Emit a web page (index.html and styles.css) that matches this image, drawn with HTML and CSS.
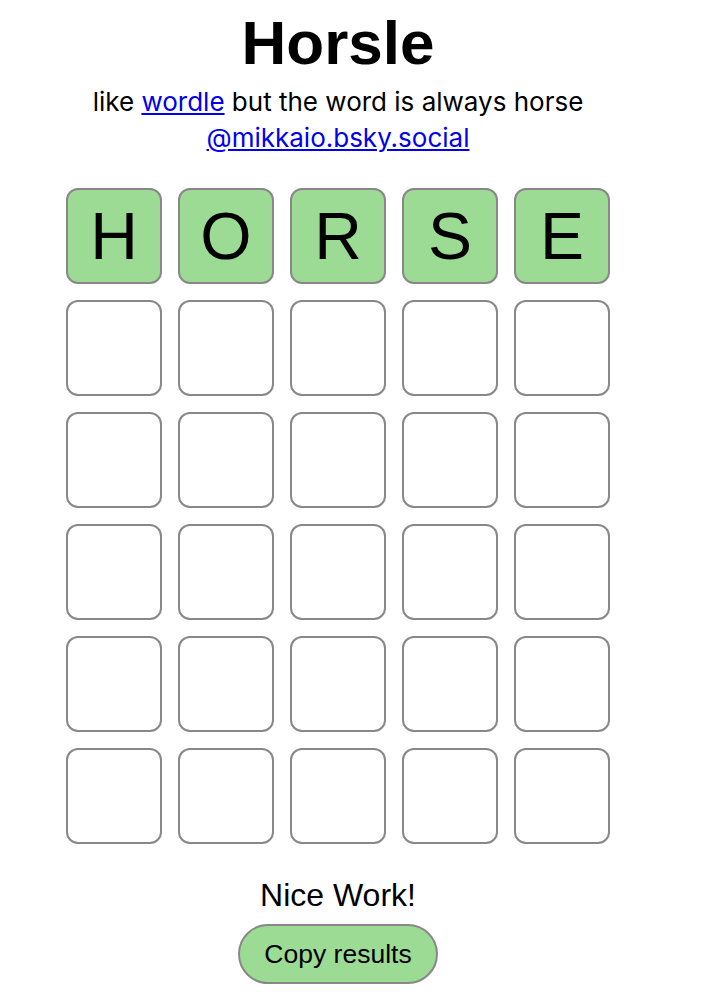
FILE: index.html
```html
<!DOCTYPE html>
<html>
<head>
<meta charset="utf-8">
<title>Horsle</title>
<link rel="stylesheet" href="styles.css">
</head>
<body>
<main class="page">
  <h1 class="title">Horsle</h1>
  <p class="subtitle">like <a href="#">wordle</a> but the word is always horse<br><a href="#">@mikkaio.bsky.social</a></p>
  <div class="board">
    <div class="tile hit">H</div>
    <div class="tile hit">O</div>
    <div class="tile hit">R</div>
    <div class="tile hit">S</div>
    <div class="tile hit">E</div>
    <div class="tile"></div><div class="tile"></div><div class="tile"></div><div class="tile"></div><div class="tile"></div>
    <div class="tile"></div><div class="tile"></div><div class="tile"></div><div class="tile"></div><div class="tile"></div>
    <div class="tile"></div><div class="tile"></div><div class="tile"></div><div class="tile"></div><div class="tile"></div>
    <div class="tile"></div><div class="tile"></div><div class="tile"></div><div class="tile"></div><div class="tile"></div>
    <div class="tile"></div><div class="tile"></div><div class="tile"></div><div class="tile"></div><div class="tile"></div>
  </div>
  <p class="result">Nice Work!</p>
  <button class="copy">Copy results</button>
</main>
</body>
</html>
```

FILE: styles.css
```css
html, body {
  margin: 0;
  padding: 0;
  background: #ffffff;
}

.page {
  width: 676px;
  padding-top: 12px;
  display: flex;
  flex-direction: column;
  align-items: center;
  font-family: "Liberation Sans", Arial, sans-serif;
  color: #000;
}

.title {
  margin: 0;
  font-size: 62px;
  line-height: 62px;
  font-weight: bold;
}

.subtitle {
  margin: 10px 0 0 0;
  font-family: Inter, "Liberation Sans", sans-serif;
  font-size: 26px;
  line-height: 36px;
  text-align: center;
}

.subtitle a {
  color: #0000ee;
  text-decoration: underline;
}

.board {
  margin-top: 32px;
  display: grid;
  grid-template-columns: repeat(5, 96px);
  grid-auto-rows: 96px;
  gap: 16px;
}

.tile {
  box-sizing: border-box;
  border: 2px solid #888888;
  border-radius: 12px;
  background: #ffffff;
  display: flex;
  align-items: center;
  justify-content: center;
  font-size: 66px;
  line-height: 1;
}

.tile.hit {
  background: #9bdb94;
}

.result {
  margin: 33px 0 0 0;
  font-size: 32px;
  line-height: 36px;
}

.copy {
  margin-top: 11px;
  box-sizing: border-box;
  width: 200px;
  height: 60px;
  border: 2px solid #888888;
  border-radius: 30px;
  background: #9bdb94;
  font-family: "Liberation Sans", Arial, sans-serif;
  font-size: 26.5px;
  color: #000;
  padding: 0;
}
```
